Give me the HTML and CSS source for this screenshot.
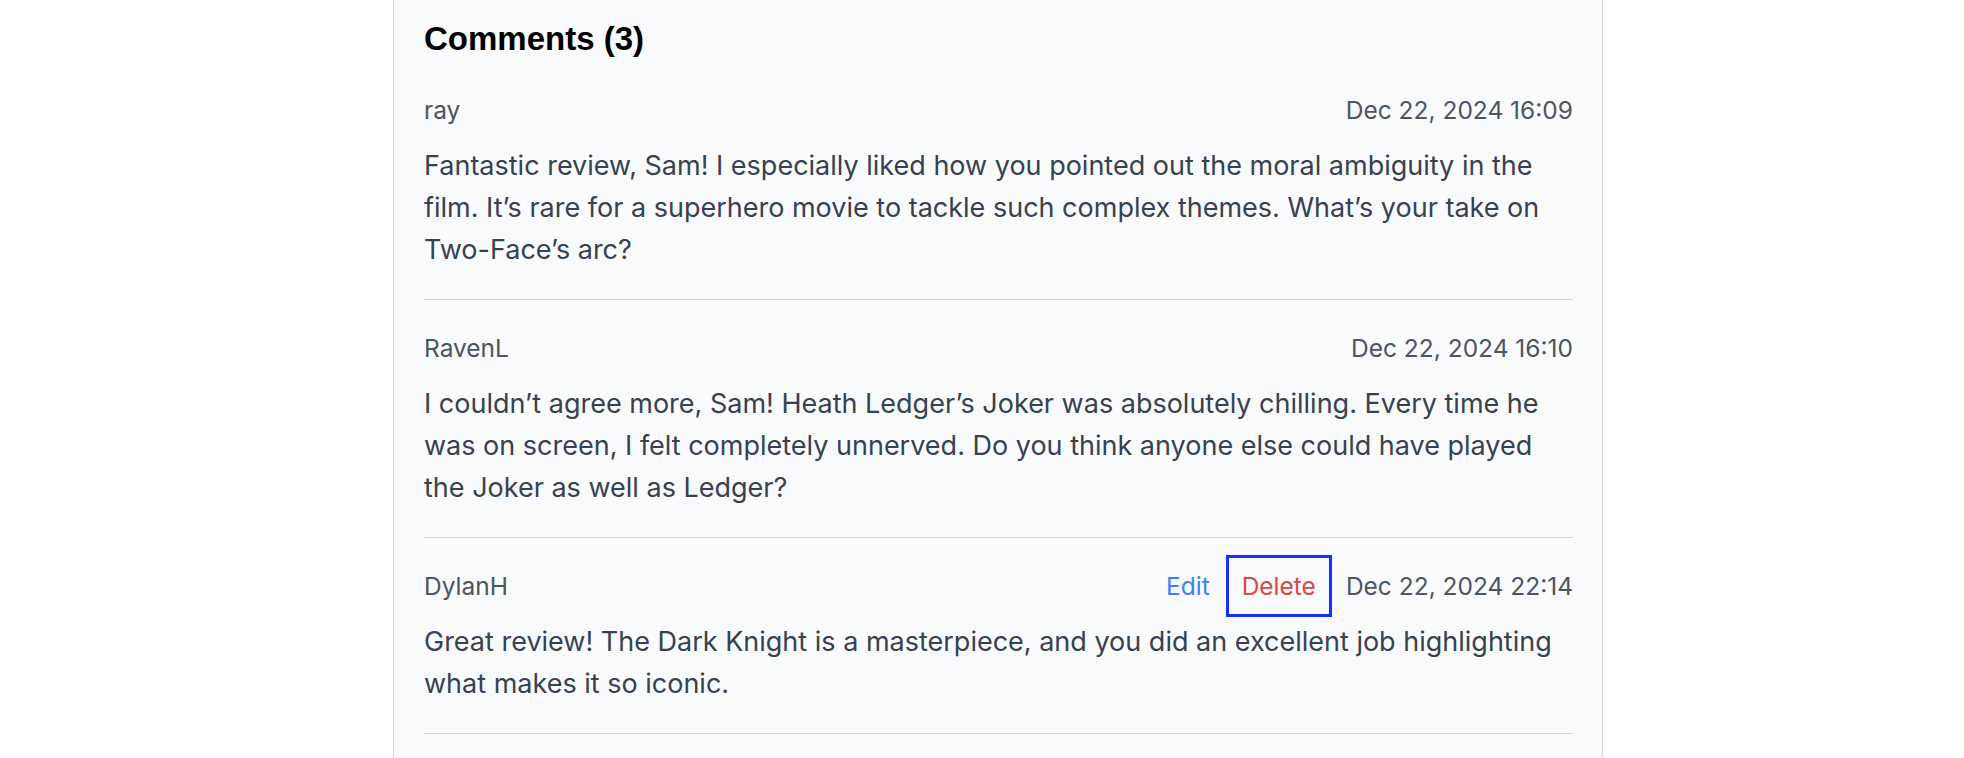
FILE: index.html
```html
<!DOCTYPE html>
<html lang="en">
<head>
<meta charset="utf-8">
<title>Comments</title>
<link rel="stylesheet" href="styles.css">
</head>
<body>
<section class="panel">
  <h2 class="title">Comments (3)</h2>
  <ul class="comments">
    <li class="comment">
      <div class="meta">
        <span class="author">ray</span>
        <div class="side">
          <time class="date">Dec 22, 2024 16:09</time>
        </div>
      </div>
      <p class="body">Fantastic review, Sam! I especially liked how you pointed out the moral ambiguity in the film. It’s rare for a superhero movie to tackle such complex themes. What’s your take on Two-Face’s arc?</p>
    </li>
    <li class="comment">
      <div class="meta">
        <span class="author">RavenL</span>
        <div class="side">
          <time class="date">Dec 22, 2024 16:10</time>
        </div>
      </div>
      <p class="body">I couldn’t agree more, Sam! Heath Ledger’s Joker was absolutely chilling. Every time he was on screen, I felt completely unnerved. Do you think anyone else could have played the Joker as well as Ledger?</p>
    </li>
    <li class="comment">
      <div class="meta">
        <span class="author">DylanH</span>
        <div class="side">
          <div class="actions">
            <button class="btn btn-edit" type="button">Edit</button>
            <button class="btn btn-delete is-focused" type="button">Delete</button>
          </div>
          <time class="date">Dec 22, 2024 22:14</time>
        </div>
      </div>
      <p class="body">Great review! The Dark Knight is a masterpiece, and you did an excellent job highlighting what makes it so iconic.</p>
    </li>
  </ul>
</section>
</body>
</html>
```
FILE: styles.css
```css
html, body {
  margin: 0;
  padding: 0;
  background: #ffffff;
}

body {
  font-family: Inter, "Noto Sans", sans-serif;
  color: #374151;
}

.panel {
  box-sizing: border-box;
  width: 1210px;
  margin-left: 393px;
  min-height: 758px;
  padding: 19px 29px 0 30px;
  background: #f9fafb;
  border-left: 1px solid #d1d5db;
  border-right: 1px solid #d1d5db;
}

.title {
  margin: 0 0 33px;
  font-family: "Liberation Sans", Arial, sans-serif;
  font-size: 33px;
  line-height: 40px;
  font-weight: 700;
  color: #000000;
}

.comments {
  list-style: none;
  margin: 0;
  padding: 0;
}

.comment {
  padding: 30px 0 28px;
  border-bottom: 1px solid #d1d5db;
}

.comment:first-child {
  padding-top: 0;
}

.meta {
  display: flex;
  align-items: center;
  justify-content: space-between;
  height: 36px;
}

.author {
  font-size: 24.5px;
  line-height: 36px;
  color: #4b5563;
}

.side {
  display: flex;
  align-items: center;
}

.actions {
  display: flex;
  align-items: center;
  gap: 6px;
  margin-right: 17px;
}

.btn {
  font-family: inherit;
  font-size: 24.5px;
  line-height: 36px;
  background: transparent;
  border: 0;
  padding: 10px 13px;
  margin: -10px 0;
  cursor: pointer;
}

.btn-edit {
  color: #3b82f6;
}

.btn-delete {
  color: #dc4646;
}

.is-focused {
  outline: 3px solid #1233ff;
  outline-offset: 0;
}

.date {
  font-size: 24.5px;
  line-height: 36px;
  color: #4b5563;
}

.body {
  margin: 17px 0 0;
  font-size: 27px;
  line-height: 42px;
  color: #374151;
}
```
